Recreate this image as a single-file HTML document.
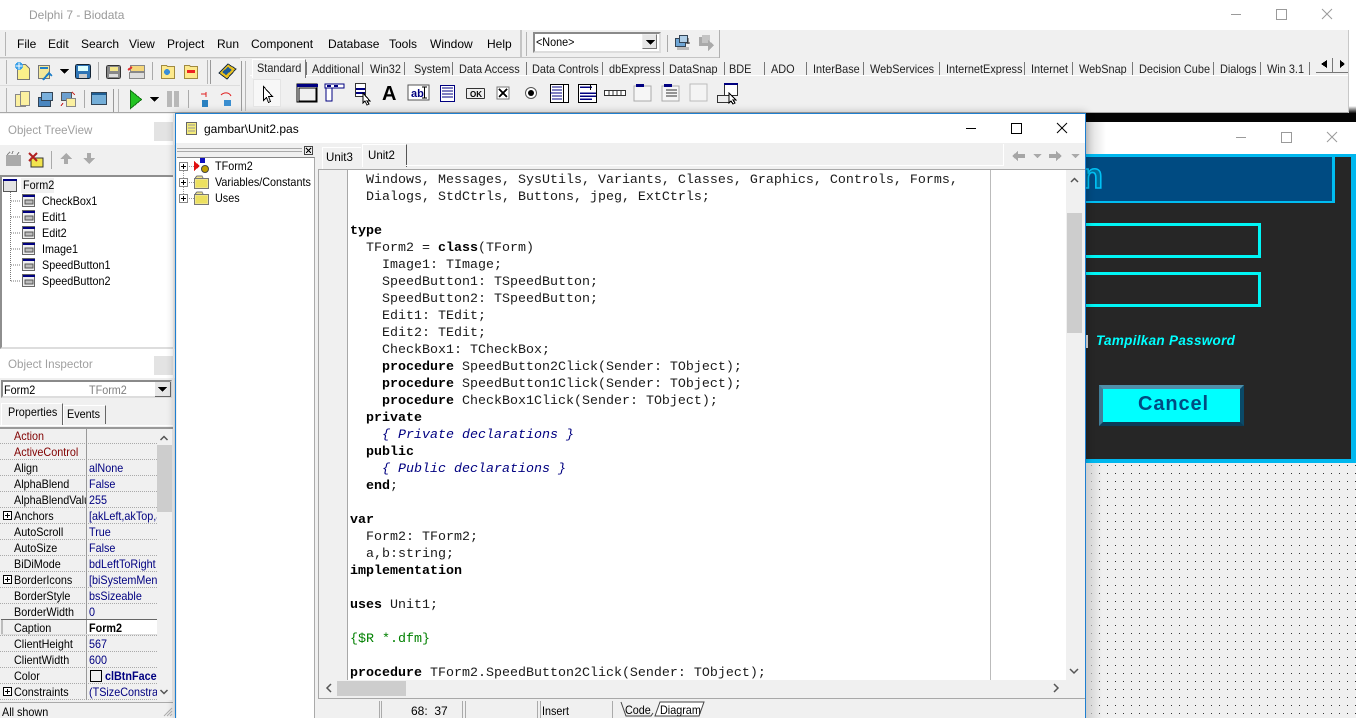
<!DOCTYPE html>
<html><head><meta charset="utf-8"><title>Delphi 7 - Biodata</title>
<style>
html,body{margin:0;padding:0;width:1356px;height:718px;overflow:hidden;background:#fff}
body{position:relative;font:12px/14px "Liberation Sans",sans-serif;color:#000}
.b{position:absolute}
.t{position:absolute;white-space:pre;line-height:14px;transform:scaleX(.9);transform-origin:0 0}
.x{transform:none}
.g{color:#9a9a9a}
.c{position:absolute;left:319px;top:170px;width:747px;height:510px;overflow:hidden;background:#fff}
pre{position:absolute;left:31px;top:2px;margin:0;font:13.33px/17px "Liberation Mono",monospace;color:#1a1a1a}
pre b{color:#000}pre i{color:#000080}pre u{text-decoration:none;color:#008000}
.n{color:#800000}.v{color:#000080}
.tab{position:absolute;top:60px;height:15px;overflow:hidden;white-space:pre;line-height:18px;color:#222;transform:scaleX(.91);transform-origin:0 0}
svg{position:absolute;left:0;top:0;z-index:5}
</style></head><body>

<!-- main window -->
<div class="b" style="left:0;top:30px;width:1349px;height:83px;background:#f0f0f0"></div>
<div class="b" style="left:0;top:112px;width:1349px;height:1px;background:#a8a8a8"></div>
<div class="b" style="left:1348px;top:30px;width:1px;height:83px;background:#c8c8c8"></div>
<div class="b" style="left:1349px;top:106px;width:7px;height:7px;background:linear-gradient(#fff,#111)"></div>
<div class="b" style="left:0;top:57px;width:719px;height:1px;background:#c4c4c4"></div>
<div class="b" style="left:719px;top:30px;width:1px;height:28px;background:#b0b0b0"></div>
<div class="t g x" style="left:29px;top:8px">Delphi 7 - Biodata</div>

<div class="t x" style="left:17px;top:37px">File</div>
<div class="t x" style="left:48px;top:37px">Edit</div>
<div class="t x" style="left:81px;top:37px">Search</div>
<div class="t x" style="left:129px;top:37px">View</div>
<div class="t x" style="left:167px;top:37px">Project</div>
<div class="t x" style="left:217px;top:37px">Run</div>
<div class="t x" style="left:251px;top:37px">Component</div>
<div class="t x" style="left:328px;top:37px">Database</div>
<div class="t x" style="left:389px;top:37px">Tools</div>
<div class="t x" style="left:430px;top:37px">Window</div>
<div class="t x" style="left:487px;top:37px">Help</div>

<div class="b" style="left:533px;top:32px;width:124px;height:17px;border:2px solid #8a8a8a;border-right-color:#ddd;border-bottom-color:#ddd;background:#fff"></div>
<div class="t" style="left:536px;top:35px">&lt;None&gt;</div>
<div class="b" style="left:642px;top:34px;width:15px;height:15px;background:#e6e6e6;border-right:1px solid #777;border-bottom:1px solid #777;border-left:1px solid #eee;border-top:1px solid #eee;box-sizing:border-box"></div>

<!-- palette tabs -->
<div class="b" style="left:250px;top:75px;width:1098px;height:1px;background:#fff"></div>
<div class="b" style="left:252px;top:59px;width:52px;height:18px;background:#f0f0f0;border-top:1px solid #fff;border-left:1px solid #fff;border-right:1px solid #777;z-index:1"></div>
<div class="tab" style="left:257px;top:59px;z-index:2">Standard</div>
<div class="tab" style="left:312px">Additional</div>
<div class="tab" style="left:370px">Win32</div>
<div class="tab" style="left:414px">System</div>
<div class="tab" style="left:459px">Data Access</div>
<div class="tab" style="left:532px">Data Controls</div>
<div class="tab" style="left:609px">dbExpress</div>
<div class="tab" style="left:669px">DataSnap</div>
<div class="tab" style="left:729px">BDE</div>
<div class="tab" style="left:771px">ADO</div>
<div class="tab" style="left:813px">InterBase</div>
<div class="tab" style="left:870px">WebServices</div>
<div class="tab" style="left:946px">InternetExpress</div>
<div class="tab" style="left:1031px">Internet</div>
<div class="tab" style="left:1079px">WebSnap</div>
<div class="tab" style="left:1139px">Decision Cube</div>
<div class="tab" style="left:1220px">Dialogs</div>
<div class="tab" style="left:1267px">Win 3.1</div>

<!-- black strip + running form window -->
<div class="b" style="left:1085px;top:113px;width:271px;height:9px;background:#050505"></div>
<div class="b" style="left:1086px;top:122px;width:20px;height:32px;background:linear-gradient(90deg,#d8d8d8,#fff)"></div>
<div class="b" style="left:1085px;top:154px;width:271px;height:309px;background:#00b7ee"></div>
<div class="b" style="left:1086px;top:157px;width:265px;height:302px;background:#262626"></div>
<div class="b" style="left:1086px;top:156px;width:249px;height:47px;background:#00bdf2"></div>
<div class="b" style="left:1086px;top:157px;width:246px;height:44px;background:#004b82;overflow:hidden">
  <div style="position:absolute;left:-5px;top:1px;font:bold 36px/36px 'Liberation Sans',sans-serif;color:#006f9c;-webkit-text-stroke:1.6px #00c2f5">n</div>
</div>
<div class="b" style="left:1080px;top:223px;width:175px;height:29px;border:3px solid #00f5f5"></div>
<div class="b" style="left:1080px;top:272px;width:175px;height:29px;border:3px solid #00f5f5"></div>
<div class="b" style="left:1086px;top:335px;width:2px;height:13px;background:#ddd"></div>
<div class="t x" style="left:1096px;top:334px;font-weight:bold;font-style:italic;font-size:13.5px;color:#00ffff;letter-spacing:.3px">Tampilkan Password</div>
<div class="b" style="left:1099px;top:385px;width:145px;height:41px;box-sizing:border-box;border:4px solid;border-color:#4f8ea8 #0a4a68 #0a3c58 #3f7f9a;background:#00ffff"></div>
<div class="t x" style="left:1101px;top:393px;width:145px;text-align:center;font:bold 20px/22px 'Liberation Sans',sans-serif;color:#004b82;letter-spacing:.9px">Cancel</div>

<!-- Left panels -->
<div class="b" style="left:0;top:113px;width:175px;height:605px;background:#f0f0f0"></div>
<div class="b" style="left:0;top:114px;width:175px;height:31px;background:#fff"></div>
<div class="t" style="left:8px;top:123px;color:#a0a0a0;transform:scaleX(.96)">Object TreeView</div>
<div class="b" style="left:154px;top:122px;width:20px;height:19px;background:#e3e3e3"></div>
<div class="b" style="left:0;top:175px;width:174px;height:174px;background:#fff;box-sizing:border-box;border:2px solid #8e8e8e;border-right:0;border-bottom-color:#ddd"></div>
<div class="b" style="left:21px;top:178px;width:33px;height:15px;background:#f0f0f0"></div>
<div class="t" style="left:23px;top:178px">Form2</div>
<div class="t" style="left:42px;top:194px">CheckBox1</div>
<div class="t" style="left:42px;top:210px">Edit1</div>
<div class="t" style="left:42px;top:226px">Edit2</div>
<div class="t" style="left:42px;top:242px">Image1</div>
<div class="t" style="left:42px;top:258px">SpeedButton1</div>
<div class="t" style="left:42px;top:274px">SpeedButton2</div>

<div class="b" style="left:0;top:349px;width:175px;height:29px;background:#fff"></div>
<div class="t" style="left:8px;top:357px;color:#a0a0a0;transform:scaleX(.97)">Object Inspector</div>
<div class="b" style="left:154px;top:356px;width:20px;height:19px;background:#e3e3e3"></div>
<div class="b" style="left:1px;top:380px;width:171px;height:18px;box-sizing:border-box;border:2px solid #8a8a8a;border-right-color:#ddd;border-bottom-color:#ddd;background:#fff"></div>
<div class="t" style="left:4px;top:383px">Form2</div>
<div class="t" style="left:89px;top:383px;color:#808080">TForm2</div>
<div class="b" style="left:155px;top:382px;width:16px;height:15px;box-sizing:border-box;background:#e6e6e6;border-right:1px solid #666;border-bottom:1px solid #666"></div>

<div class="b" style="left:1px;top:403px;width:60px;height:21px;background:#f0f0f0;border-top:1px solid #fff;border-left:1px solid #fff;border-right:1px solid #666"></div>
<div class="t" style="left:8px;top:405px">Properties</div>
<div class="b" style="left:63px;top:405px;width:41px;height:18px;border-right:1px solid #666;border-left:1px solid #fff;border-top:1px solid #fff"></div>
<div class="t" style="left:67px;top:407px">Events</div>
<div class="b" style="left:0;top:425px;width:173px;height:1px;background:#fff"></div>
<div class="b" style="left:0;top:427px;width:173px;height:2px;background:#999"></div>

<!-- inspector rows -->
<div class="t n" style="left:14px;top:429px">Action</div>
<div class="t n" style="left:14px;top:445px">ActiveControl</div>
<div class="t" style="left:14px;top:461px">Align</div><div class="t v" style="left:89px;top:461px">alNone</div>
<div class="t" style="left:14px;top:477px">AlphaBlend</div><div class="t v" style="left:89px;top:477px">False</div>
<div class="t" style="left:14px;top:493px;width:80px;overflow:hidden">AlphaBlendValue</div><div class="t v" style="left:89px;top:493px">255</div>
<div class="t" style="left:14px;top:509px">Anchors</div><div class="t v" style="left:89px;top:509px;width:76px;overflow:hidden">[akLeft,akTop,akRight]</div>
<div class="t" style="left:14px;top:525px">AutoScroll</div><div class="t v" style="left:89px;top:525px">True</div>
<div class="t" style="left:14px;top:541px">AutoSize</div><div class="t v" style="left:89px;top:541px">False</div>
<div class="t" style="left:14px;top:557px">BiDiMode</div><div class="t v" style="left:89px;top:557px;width:76px;overflow:hidden">bdLeftToRight</div>
<div class="t" style="left:14px;top:573px">BorderIcons</div><div class="t v" style="left:89px;top:573px;width:76px;overflow:hidden">[biSystemMenu,biMinimize]</div>
<div class="t" style="left:14px;top:589px">BorderStyle</div><div class="t v" style="left:89px;top:589px">bsSizeable</div>
<div class="t" style="left:14px;top:605px">BorderWidth</div><div class="t v" style="left:89px;top:605px">0</div>
<div class="b" style="left:87px;top:620px;width:70px;height:14px;background:#fff"></div>
<div class="t" style="left:14px;top:621px">Caption</div><div class="t" style="left:89px;top:621px;font-weight:bold">Form2</div>
<div class="t" style="left:14px;top:637px">ClientHeight</div><div class="t v" style="left:89px;top:637px">567</div>
<div class="t" style="left:14px;top:653px">ClientWidth</div><div class="t v" style="left:89px;top:653px">600</div>
<div class="t" style="left:14px;top:669px">Color</div><div class="t v" style="left:105px;top:669px;font-weight:bold;width:58px;overflow:hidden">clBtnFace</div>
<div class="t" style="left:14px;top:685px">Constraints</div><div class="t v" style="left:89px;top:685px;width:76px;overflow:hidden">(TSizeConstraints)</div>
<div class="b" style="left:0;top:702px;width:173px;height:1px;background:#aaa"></div>
<div class="t" style="left:2px;top:705px">All shown</div>

<!-- editor window -->
<div class="b" style="left:175px;top:113px;width:911px;height:605px;background:#f0f0f0;box-shadow:0 0 8px rgba(0,0,0,.3);z-index:0"></div>
<div class="b" style="left:176px;top:114px;width:909px;height:29px;background:#fff"></div>
<div class="t x" style="left:204px;top:122px">gambar\Unit2.pas</div>
<div class="b" style="left:177px;top:157px;width:137px;height:561px;background:#fff;border-top:1px solid #888;border-right:1px solid #aaa"></div>
<div class="t" style="left:215px;top:159px">TForm2</div>
<div class="t" style="left:215px;top:175px">Variables/Constants</div>
<div class="t" style="left:215px;top:191px">Uses</div>

<div class="b" style="left:322px;top:147px;width:38px;height:21px;background:#f0f0f0;border-top:1px solid #fff;border-left:1px solid #fff"></div>
<div class="t" style="left:326px;top:150px;transform:scaleX(.96)">Unit3</div>
<div class="b" style="left:362px;top:144px;width:43px;height:22px;background:#f0f0f0;border-top:1px solid #fff;border-left:1px solid #fff;border-right:1px solid #555"></div>
<div class="t" style="left:368px;top:148px;transform:scaleX(.96)">Unit2</div>
<div class="b" style="left:406px;top:165px;width:597px;height:1px;background:#fff"></div>
<div class="b" style="left:1003px;top:144px;width:1px;height:22px;background:#fff"></div>
<div class="b" style="left:318px;top:169px;width:767px;height:1px;background:#a8a8a8"></div>
<div class="b" style="left:318px;top:169px;width:1px;height:530px;background:#a8a8a8"></div>

<div class="c">
<div class="b" style="left:0;top:0;width:28px;height:510px;background:#f0f0f0"></div>
<div class="b" style="left:28px;top:0;width:1px;height:510px;background:#a8a8a8"></div>
<div class="b" style="left:671px;top:0;width:1px;height:510px;background:#bbb"></div>
<pre>  Windows, Messages, SysUtils, Variants, Classes, Graphics, Controls, Forms,
  Dialogs, StdCtrls, Buttons, jpeg, ExtCtrls;

<b>type</b>
  TForm2 = <b>class</b>(TForm)
    Image1: TImage;
    SpeedButton1: TSpeedButton;
    SpeedButton2: TSpeedButton;
    Edit1: TEdit;
    Edit2: TEdit;
    CheckBox1: TCheckBox;
    <b>procedure</b> SpeedButton2Click(Sender: TObject);
    <b>procedure</b> SpeedButton1Click(Sender: TObject);
    <b>procedure</b> CheckBox1Click(Sender: TObject);
  <b>private</b>
    <i>{ Private declarations }</i>
  <b>public</b>
    <i>{ Public declarations }</i>
  <b>end</b>;

<b>var</b>
  Form2: TForm2;
  a,b:string;
<b>implementation</b>

<b>uses</b> Unit1;

<u>{$R *.dfm}</u>

<b>procedure</b> TForm2.SpeedButton2Click(Sender: TObject);</pre>
</div>
<div class="b" style="left:1067px;top:213px;width:15px;height:120px;background:#cdcdcd;z-index:2"></div>
<div class="b" style="left:337px;top:681px;width:69px;height:15px;background:#cdcdcd;z-index:2"></div>
<div class="b" style="left:318px;top:698px;width:767px;height:1px;background:#a8a8a8"></div>
<div class="t x" style="left:411px;top:704px">68:  37</div>
<div class="t" style="left:542px;top:704px">Insert</div>
<div class="b" style="left:379px;top:701px;width:1px;height:17px;background:#aaa"></div>
<div class="b" style="left:381px;top:701px;width:1px;height:17px;background:#aaa"></div>
<div class="b" style="left:462px;top:701px;width:1px;height:17px;background:#aaa"></div>
<div class="b" style="left:465px;top:701px;width:1px;height:17px;background:#aaa"></div>
<div class="b" style="left:537px;top:701px;width:1px;height:17px;background:#aaa"></div>
<div class="b" style="left:540px;top:701px;width:1px;height:17px;background:#aaa"></div>
<div class="b" style="left:612px;top:701px;width:1px;height:17px;background:#aaa"></div>

<svg width="1356" height="718" viewBox="0 0 1356 718" fill="none" shape-rendering="crispEdges">
<defs>
<pattern id="dots" x="0" y="0" width="8" height="8" patternUnits="userSpaceOnUse"><rect x="3" y="1" width="1" height="1" fill="#333"/></pattern>
<linearGradient id="sh"><stop offset="0" stop-color="#cfcfcf"/><stop offset="1" stop-color="#cfcfcf" stop-opacity="0"/></linearGradient>
<g id="frm"><rect x=".5" y=".5" width="12" height="12" fill="#eee" stroke="#666"/><rect x="1" y="1" width="12" height="2" fill="#000080"/><rect x="3" y="6" width="8" height="4" fill="#bbb" stroke="#555" stroke-width=".6"/></g>
<g id="plus"><rect x=".5" y=".5" width="8" height="8" fill="#fff" stroke="#888"/><path d="M2 4.500h5M4.500 2v5" stroke="#000"/></g>
<g id="pbox"><rect x=".5" y=".5" width="8" height="8" fill="#fff" stroke="#000"/><path d="M2 4.500h5M4.500 2v5" stroke="#000"/></g>
<g id="folder"><path d="M.5 3.500h14v10h-14zM1 3l2-2h5l1 2" fill="#f0e68c" stroke="#777"/><rect x="2" y="5" width="11" height="7" fill="#ece060"/></g>
<g id="open"><path d="M1.500 2.500h5l1 1h7v12h-13z" fill="#fde98c" stroke="#a08a40"/></g>
<path id="tri" d="M0 0h9l-4.500 5z" fill="#000"/>
<path id="gtri" d="M0 0h9l-4.500 4z" fill="#aaa"/>
</defs>

<!-- window controls -->
<g stroke="#9a9a9a" fill="none" shape-rendering="auto">
<path d="M1231 14.500h10M1276.500 9.500h10v10h-10zM1322 9l10 10M1332 9l-10 10"/>
<path d="M1236 137.500h10M1281.500 132.500h10v10h-10zM1327 132l10 10M1337 132l-10 10"/>
</g>
<g stroke="#000" fill="none" shape-rendering="auto">
<path d="M966 128.500h10M1011.500 123.500h10v10h-10zM1057 123l10 10M1067 123l-10 10"/>
</g>

<!-- form-designer dot grid -->
<rect x="1086" y="463" width="270" height="255" fill="#f0f0f0"/>
<rect x="1086" y="463" width="270" height="255" fill="url(#dots)"/>
<rect x="1086" y="463" width="16" height="255" fill="url(#sh)"/>
<rect x="1085" y="113" width="1" height="605" fill="#1e7fd0"/>
<rect x="175" y="113" width="911" height="1" fill="#1e7fd0"/>
<rect x="175" y="113" width="1" height="605" fill="#1e7fd0"/>

<!-- toolbar grips -->
<g stroke="#b5b5b5">
<path d="M5.500 32v24M6.500 60v24M6.500 88v24M207.500 60v24M118.500 89v23M245.500 61v50M526.500 32v24"/>
<path d="M98.500 62v18M152.500 62v18M84.500 90v18M188.500 90v18" stroke="#aaa"/>
<path d="M113.500 89v23M210.500 60v24M241.500 61v50M521 30v27" stroke="#999"/>
<path d="M0 85.500h240M0 58.500h240" stroke="#ddd"/>
<path d="M667.500 35v17" stroke="#aaa"/>
</g>
<use href="#tri" x="646" y="40"/>

<!-- row 1 icons -->
<path d="M17.500 64.500h8l4 4v11h-12z" fill="#fbf08a" stroke="#777"/><circle cx="19" cy="66" r="4" fill="#3aa0e8"/><path d="M19 62.500v7M15.500 66h7" stroke="#fff"/>
<path d="M38.500 65.500h11v13h-11z" fill="#f4e99a" stroke="#777"/><path d="M40 68l8 0M43 80l6-7 3 3" stroke="#1e7fc8" stroke-width="2"/>
<use href="#tri" x="60" y="69"/>
<rect x="75.500" y="64.500" width="15" height="14" rx="2" fill="#2e74b5" stroke="#123"/><rect x="78" y="66" width="10" height="5" fill="#dff"/><rect x="79" y="74" width="8" height="4" fill="#ccc"/>
<rect x="106.500" y="65.500" width="14" height="13" rx="2" fill="#888" stroke="#333"/><rect x="110" y="67" width="8" height="4" fill="#f3e58a"/><rect x="109" y="74" width="9" height="3" fill="#ddd"/>
<path d="M130.500 65.500h14v6h-14z" fill="#f4d67a" stroke="#888"/><rect x="129.500" y="72.500" width="15" height="6" fill="#ddd" stroke="#888"/><path d="M128 70l4-3" stroke="#d33" stroke-width="2"/>
<use href="#open" x="160" y="63"/><circle cx="167" cy="72" r="3" fill="#3a8fd8"/>
<use href="#open" x="183" y="63"/><rect x="187" y="70" width="8" height="3" fill="#e22"/>
<path d="M219 73l9-9 8 5-9 10z" fill="#e8c020" stroke="#234"/><path d="M222 72l6-5 4 3-6 5z" fill="#1c5a98"/>

<!-- row 2 icons -->
<rect x="15.500" y="94.500" width="10" height="12" fill="#fbf0a0" stroke="#888"/><rect x="20.500" y="91.500" width="9" height="14" fill="#fbf0a0" stroke="#888"/>
<rect x="38.500" y="97.500" width="12" height="9" fill="#4a86c0" stroke="#345"/><rect x="41.500" y="92.500" width="11" height="8" fill="#7ab0dc" stroke="#345"/>
<rect x="61.500" y="92.500" width="10" height="8" fill="#6ca0d0" stroke="#555"/><rect x="66.500" y="98.500" width="9" height="8" fill="#fbf0a0" stroke="#888"/><path d="M72 92l3 3M63 103l-2 3" stroke="#c33"/>
<rect x="91.500" y="92.500" width="15" height="12" fill="#74aed8" stroke="#345"/><rect x="92" y="93" width="14" height="2" fill="#1f5f95"/>
<path d="M130.500 90.500l11 9-11 9z" fill="#22c422" stroke="#127712"/>
<use href="#tri" x="150" y="97"/>
<rect x="167" y="91" width="5" height="16" fill="#b8b8b8"/><rect x="174" y="91" width="5" height="16" fill="#b8b8b8"/>
<rect x="202" y="100" width="6" height="7" fill="#2a80c0"/><path d="M201 94l5 0M206 92v5" stroke="#e02020"/>
<rect x="224" y="100" width="7" height="6" fill="#3a8ed0"/><path d="M221 95c3-3 8-3 10 1" stroke="#e02020" shape-rendering="auto"/>

<!-- disabled toolbar icons -->
<g><rect x="675.500" y="38.500" width="10" height="8" fill="#6ea6d6" stroke="#345"/><rect x="679.500" y="35.500" width="8" height="7" fill="#b0cfe8" stroke="#345"/><path d="M688 38v6M686 43h4" stroke="#333"/><rect x="677" y="47" width="12" height="3" fill="#bbb"/></g>
<g fill="#aaa"><rect x="699" y="37" width="9" height="9"/><rect x="702" y="35" width="8" height="8" fill="#c4c4c4"/><path d="M708 40l6 5-6 6z"/></g>

<!-- tab separators -->
<g stroke="#777"><path d="M306.500 62v13M362.500 62v13M404.500 62v13M452.500 62v13M526.500 62v13M602.500 62v13M663.500 62v13M724.500 62v13M764.500 62v13M806.500 62v13M863.500 62v13M939.500 62v13M1024.500 62v13M1072.500 62v13M1132.500 62v13M1213.500 62v13M1260.500 62v13M1309.500 62v13M1332.500 58v14M1316 72.500h32"/></g>
<path d="M1327 60l-6 4 6 4zM1340 60l5 4-5 4z" fill="#000"/>

<!-- palette icons -->
<rect x="253.500" y="79.500" width="27" height="27" fill="#f7f7f7" stroke="#e4e4e4"/>
<path d="M263.500 86.500v14l3-3 2 5 2-1-2-5h4z" fill="#fff" stroke="#000"/>
<rect x="297" y="84" width="20" height="18" fill="#fff" stroke="#000"/><rect x="297" y="84" width="21" height="3" fill="#000080"/><rect x="299" y="88" width="17" height="13" fill="#f0f0f0" stroke="#000" stroke-width=".8"/>
<path d="M325 84h19v4h-19zM326 88h6v13h-6z" fill="#fff" stroke="#000080"/><rect x="327" y="85" width="4" height="2" fill="#000080"/><rect x="334" y="85" width="4" height="2" fill="#000080"/>
<rect x="355.500" y="83.500" width="10" height="13" fill="#fff" stroke="#333"/><rect x="356" y="88" width="9" height="2" fill="#000080"/><rect x="356" y="92" width="9" height="2" fill="#000080"/><path d="M363 93v10l2-2 2 4 2-1-2-3h3z" fill="#fff" stroke="#000"/>
<text x="382" y="100" font-family="Liberation Sans" font-weight="bold" font-size="20" fill="#000">A</text>
<rect x="408" y="85" width="21" height="15" fill="#fff" stroke="#555"/><text x="411" y="97" font-family="Liberation Sans" font-weight="bold" font-size="11" fill="#000080">ab</text><path d="M424.500 87v11M422 87h5M422 98h5" stroke="#000"/>
<rect x="440.500" y="85.500" width="14" height="16" fill="#fff" stroke="#000080"/><path d="M442 88h11M442 91h11M442 94h11M442 97h11" stroke="#000080"/>
<rect x="466.500" y="88.500" width="18" height="10" rx="1" fill="#eee" stroke="#333"/><text x="470" y="97" font-family="Liberation Sans" font-size="8" font-weight="bold" fill="#000">OK</text>
<rect x="497" y="87" width="12" height="12" fill="#fff" stroke="#777"/><path d="M499 89l8 8M507 89l-8 8" stroke="#000" stroke-width="2"/>
<circle cx="531" cy="93" r="5.500" fill="#fff" stroke="#555" shape-rendering="auto"/><circle cx="531" cy="93" r="3" fill="#000" shape-rendering="auto"/>
<rect x="550.500" y="84.500" width="18" height="18" fill="#fff" stroke="#000"/><path d="M552 87h10M552 90h10M550 93h12M552 96h10M552 99h10" stroke="#000080"/><rect x="563" y="84" width="1" height="19" fill="#000"/>
<rect x="578.500" y="84.500" width="18" height="18" fill="#fff" stroke="#000"/><path d="M580 87h12M580 93h16M580 96h16M580 99h12" stroke="#000080" stroke-width="1.500"/><rect x="590" y="84" width="1" height="6" fill="#000"/>
<rect x="604.500" y="90.500" width="21" height="5" fill="#fff" stroke="#333"/><path d="M609 90v6M613 90v6M617 90v6M621 90v6" stroke="#333"/>
<rect x="634" y="86" width="17" height="15" fill="#f6f6f6" stroke="#aaa"/><rect x="636" y="84" width="8" height="3" fill="#000080"/>
<rect x="662" y="86" width="17" height="15" fill="#f6f6f6" stroke="#aaa"/><rect x="664" y="84" width="8" height="3" fill="#000080"/><path d="M666 90h11M666 93h11M666 96h11" stroke="#333"/>
<rect x="690" y="84" width="17" height="17" fill="#f4f4f4" stroke="#bbb"/>
<rect x="724.500" y="84.500" width="13" height="11" fill="#fff" stroke="#333"/><rect x="724" y="83" width="14" height="2" fill="#000080"/><rect x="717.500" y="95.500" width="12" height="7" fill="#eee" stroke="#333"/><path d="M729 93v10l2-2 2 3 2-1-2-3h3z" fill="#fff" stroke="#000"/>

<!-- Object treeview toolbar -->
<g><rect x="6" y="155" width="15" height="11" fill="#aaa"/><path d="M7 155l3-3M12 154l1-3M17 155l2-3" stroke="#888"/></g>
<g><rect x="31" y="158" width="12" height="9" fill="#f2e44e" stroke="#333"/><path d="M29 153l8 8M37 153l-8 8" stroke="#b02020" stroke-width="2" shape-rendering="auto"/></g>
<rect x="51" y="151" width="1" height="18" fill="#aaa"/>
<path d="M66 153l-6 6h4v5h4v-5h4zM89 164l-6-6h4v-5h4v5h4z" fill="#aaa"/>
<path d="M0 175.500h174" stroke="#8e8e8e"/>

<!-- Object tree -->
<rect x="3.500" y="179.500" width="13" height="12" fill="#e4e4e4" stroke="#555"/><rect x="3" y="179" width="14" height="2" fill="#000080"/>
<path d="M10.500 192v89M11 201h10M11 217h10M11 233h10M11 249h10M11 265h10M11 281h10" stroke="#777" stroke-dasharray="1 1"/>
<use href="#frm" x="22" y="194"/><use href="#frm" x="22" y="210"/><use href="#frm" x="22" y="226"/><use href="#frm" x="22" y="242"/><use href="#frm" x="22" y="258"/><use href="#frm" x="22" y="274"/>

<!-- inspector chrome -->
<use href="#tri" x="158" y="387"/>
<g stroke="#aaa" stroke-dasharray="1 1"><path d="M0 443.500h157M0 459.500h157M0 475.500h157M0 491.500h157M0 507.500h157M0 523.500h157M0 539.500h157M0 555.500h157M0 571.500h157M0 587.500h157M0 603.500h157M0 667.500h157M0 683.500h157M0 651.500h157M0 635.500h157M0 699.500h157"/></g>
<path d="M86.500 429v271" stroke="#999"/>
<rect x="157" y="429" width="15" height="271" fill="#f0f0f0"/>
<rect x="157" y="445" width="15" height="67" fill="#cdcdcd"/>
<path d="M160.500 440l3.500-3.500 3.500 3.500M160.500 690l3.500 3.500 3.500-3.500" stroke="#555" stroke-width="1.500" shape-rendering="auto"/>
<path d="M1 619.500h156" stroke="#666" stroke-width="1"/><path d="M1 634.500h156" stroke="#ddd"/><path d="M2 620v14" stroke="#888"/>
<use href="#pbox" x="3" y="511"/><use href="#pbox" x="3" y="575"/><use href="#pbox" x="3" y="687"/>
<rect x="90.500" y="670.500" width="11" height="11" fill="#f0f0f0" stroke="#000"/>
<path d="M164 716l8-8M167 716l5-5M170 716l2-2" stroke="#aaa" shape-rendering="auto"/>
<path d="M173.500 114v604" stroke="#ddd"/>

<!-- editor title icon, splitter, tree -->
<rect x="186.500" y="122.500" width="10" height="12" fill="#f5ec7a" stroke="#666"/><path d="M188 125h7M188 128h7M188 131h7" stroke="#999"/>
<path d="M177 148.500h125M177 151.500h125" stroke="#aaa"/>
<rect x="304.500" y="146.500" width="8" height="8" fill="#eee" stroke="#444"/><path d="M306 148l5 5M311 148l-5 5" stroke="#000"/>
<use href="#plus" x="179" y="162"/><use href="#plus" x="179" y="178"/><use href="#plus" x="179" y="194"/>
<path d="M183.500 171v7M183.500 187v7M189 166.500h5M189 182.500h5M189 198.500h5" stroke="#999" stroke-dasharray="1 1"/>
<path d="M194 161l6 5-6 5z" fill="#e01010"/><rect x="200" y="158" width="5" height="5" fill="#1010c0"/><circle cx="205" cy="169" r="3.500" fill="#c0a000" stroke="#444" shape-rendering="auto"/>
<use href="#folder" x="194" y="175"/><use href="#folder" x="194" y="191"/>

<!-- editor nav arrows -->
<path d="M1012 156l6-5v3h7v4h-7v3zM1062 156l-6-5v3h-7v4h7v3z" fill="#a6a6a6"/>
<use href="#gtri" x="1033" y="154"/><use href="#gtri" x="1071" y="154"/>

<!-- editor scrollbars -->
<path d="M1071 182l3.500-3.500 3.500 3.500M1070 669l4 4 4-4M331 684l-4 4 4 4M1054 684l4 4-4 4" stroke="#555" stroke-width="1.500" shape-rendering="auto"/>

<!-- code / diagram tabs -->
<path d="M621 702l5 14h25l2-3" stroke="#444" shape-rendering="auto"/>
<path d="M655 716l5-14h44l-5 14z" fill="#fff" stroke="#444" shape-rendering="auto"/>
</svg>
<div class="t" style="left:625px;top:703px;z-index:6">Code</div>
<div class="t" style="left:660px;top:703px;z-index:6">Diagram</div>
</body></html>
